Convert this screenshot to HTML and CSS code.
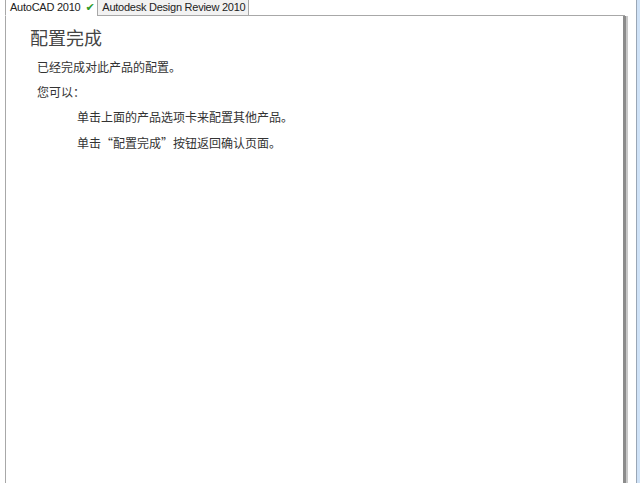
FILE: index.html
```html
<!DOCTYPE html>
<html lang="zh-CN">
<head>
  <meta charset="UTF-8" />
  <title>配置完成</title>
  <link rel="stylesheet" href="styles.css">
</head>
<body>
  <div class="window">
    <div class="main">
      <div class="tabs">
        <div class="tab active">AutoCAD 2010<span class="check">&#10004;</span></div>
        <div class="tab">Autodesk Design Review 2010</div>
        <div class="tab-rest"></div>
      </div>
      <div class="panel">
        <h1>配置完成</h1>
        <p>已经完成对此产品的配置。</p>
        <p>您可以：</p>
        <p class="indent">单击上面的产品选项卡来配置其他产品。</p>
        <p class="indent">单击“配置完成”按钮返回确认页面。</p>
      </div>
    </div>
    <div class="edge"></div>
  </div>
</body>
</html>
```

FILE: styles.css
```css
html, body {
  margin: 0;
  height: 100%;
  background-color: #fff;
}
body {
  font-family: "Noto Sans CJK SC", "Liberation Sans", sans-serif;
  color: #333;
  overflow: hidden;
}
.window {
  display: flex;
  height: 483px;
}
.main {
  width: 636px;
  display: flex;
  flex-direction: column;
}
.edge {
  flex: 1;
  border-left: 1px solid #9aa7b6;
  background-color: #cfe2f7;
}
.tabs {
  display: flex;
  height: 16px;
  padding-left: 5px;
}
.tab {
  font-family: "Liberation Sans", "Noto Sans CJK SC", sans-serif;
  font-size: 11px;
  letter-spacing: -0.25px;
  line-height: 15px;
  color: #222;
  padding: 0 5px;
  border-left: 1px solid #a8a8a8;
  border-bottom: 1px solid #a8a8a8;
  white-space: nowrap;
}
.tab.active {
  border-bottom-color: #fff;
  padding-left: 4px;
  padding-right: 3px;
  background-color: #fff;
}
.tab + .tab {
  background-color: #f2f2f2;
  border-right: 1px solid #a8a8a8;
  padding: 0 3px 0 4px;
}
.check {
  color: #2f9a2a;
  font-family: "DejaVu Sans", sans-serif;
  font-size: 11px;
  margin-left: 5px;
}
.tab-rest {
  flex: 1;
  margin-right: 11px;
  border-bottom: 1px solid #a8a8a8;
}
.panel {
  flex: 1;
  margin-left: 5px;
  width: 617px;
  border-left: 1px solid #a8a8a8;
  border-right: 3px solid #8c8c8c;
  box-shadow: 2px 0 0 #c8c8c8;
  padding: 9px 0 0 0;
}
h1 {
  font-weight: normal;
  font-size: 18px;
  line-height: 24px;
  color: #444;
  margin: 0 0 10px 24px;
}
p {
  font-size: 12px;
  line-height: 16px;
  margin: 0 0 9px 31px;
}
p.indent {
  margin-left: 71px;
  margin-bottom: 10px;
}
```
